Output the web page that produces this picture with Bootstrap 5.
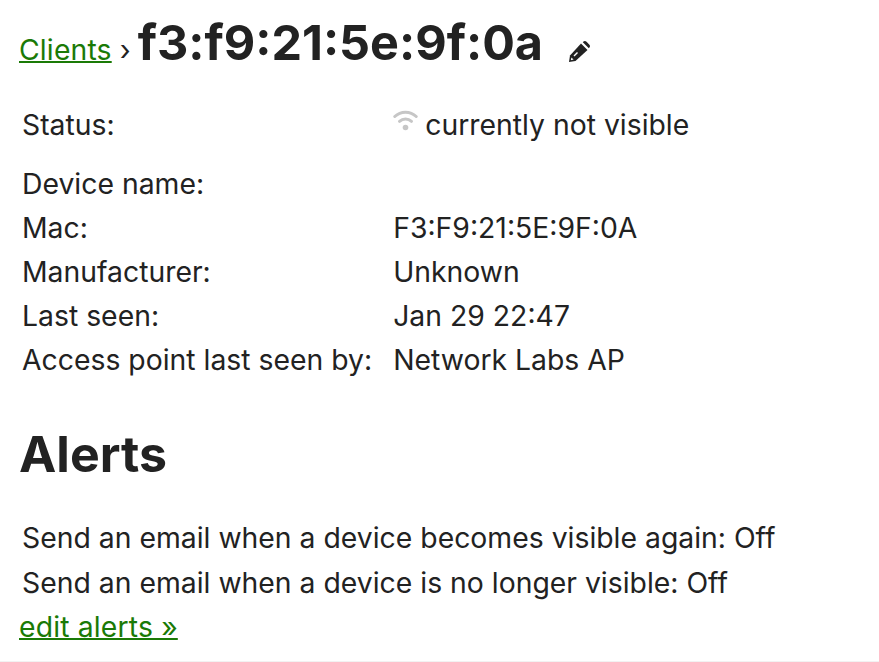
<!DOCTYPE html>
<html lang="en">
<head>
<meta charset="utf-8">
<title>Client</title>
<link rel="stylesheet" href="https://cdn.jsdelivr.net/npm/bootstrap@5.3.0/dist/css/bootstrap.min.css">
<style>
html,body{height:100%;overflow:hidden}
body{font-family:Inter,"Liberation Sans",sans-serif;font-size:28.35px;line-height:44px;color:#222;background:#fff}
.page-wrap{padding:15px 20px 0 19px;height:662px;border-bottom:1px solid #f2f2f2}
a{color:#1a7a06;text-decoration-thickness:2px;letter-spacing:.15px}
.head-line{margin:0;line-height:60px;display:flex;align-items:baseline}
.crumb-sep{margin:0 7px 0 8px}
.dev-title{font-size:48.5px;font-weight:700;margin:-2px 0 0;line-height:60px}
.pencil{width:21px;height:21px;margin-left:26px;align-self:center;margin-top:8px}
.info-tbl{margin:22px 0 0 3px;border-collapse:collapse}
.info-tbl td{padding:0;height:44px;vertical-align:middle}
.info-tbl td:first-child{padding-right:21px}
.info-tbl .st-row td{height:60px;padding:1px 0 11px;vertical-align:baseline}
.info-tbl .st-row td:first-child{padding-right:21px}
.wifi{width:25px;height:22px;vertical-align:4px;margin-right:7px}
.alert-h{font-size:50px;font-weight:700;margin:42px 0 0;line-height:60px}
.alert-list{margin:32px 0 0 3px}
.alert-list div+div{margin-top:1px}
</style>
</head>
<body>
<div class="page-wrap">
  <div class="head-line">
    <a href="#">Clients</a><span class="crumb-sep">›</span>
    <h1 class="dev-title">f3:f9:21:5e:9f:0a</h1>
    <svg class="pencil" viewBox="0 0 21 21" aria-hidden="true"><path fill="#222" d="M0 21l1-6.500L12 2.500l6.500 6.500L6.500 20z"/><path fill="#222" d="M13.800 1.200l.4-.4a2.400 2.400 0 0 1 3.300 0l2.700 2.700a2.400 2.400 0 0 1 0 3.300l-.4.400z"/><path fill="#fff" d="M4.500 14.500l3.500-3.500 1 1-3.500 3.500z"/><path fill="#fff" d="M1.800 19.200l.6-2.800 2.200 2.200z"/></svg>
  </div>
  <table class="info-tbl">
    <tbody>
    <tr class="st-row"><td>Status:</td><td><svg class="wifi" viewBox="0 0 25 22" aria-hidden="true"><g fill="none" stroke="#c6c6c6" stroke-width="3" stroke-linecap="round"><path d="M1.800 7.500a15.500 15.500 0 0 1 21.400 0"/><path d="M6.500 12.300a9 9 0 0 1 12 0"/></g><circle cx="12.500" cy="18.500" r="2.800" fill="#c6c6c6"/></svg>currently not visible</td></tr>
    <tr><td>Device name:</td><td></td></tr>
    <tr><td>Mac:</td><td>F3:F9:21:5E:9F:0A</td></tr>
    <tr><td>Manufacturer:</td><td>Unknown</td></tr>
    <tr><td>Last seen:</td><td>Jan 29 22:47</td></tr>
    <tr><td>Access point last seen by:</td><td>Network Labs AP</td></tr>
    </tbody>
  </table>
  <h2 class="alert-h">Alerts</h2>
  <div class="alert-list">
    <div>Send an email when a device becomes visible again: Off</div>
    <div>Send an email when a device is no longer visible: Off</div>
  </div>
  <a href="#">edit alerts »</a>
</div>
<script src="https://cdn.jsdelivr.net/npm/bootstrap@5.3.0/dist/js/bootstrap.bundle.min.js"></script>
</body>
</html>
